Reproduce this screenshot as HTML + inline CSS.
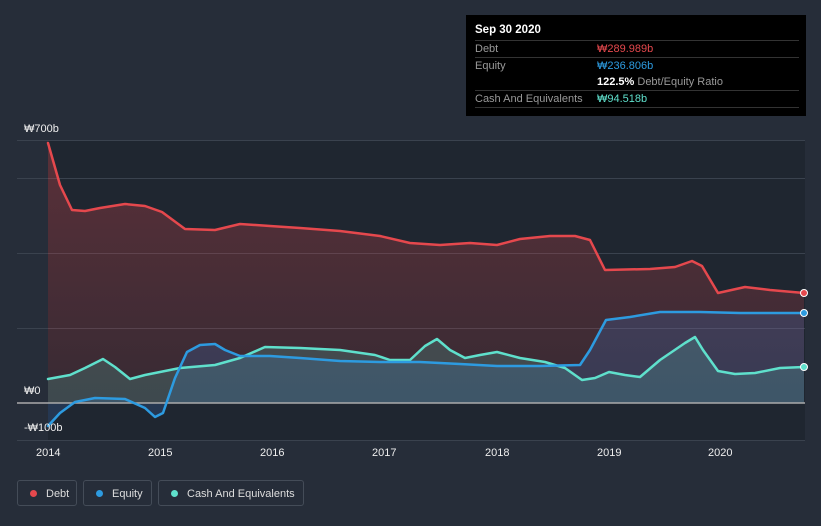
<!DOCTYPE html>
<html><head><meta charset="utf-8"><style>
body{margin:0;width:821px;height:526px;background:#262d39;font-family:"Liberation Sans","Noto Sans CJK KR",sans-serif;overflow:hidden;position:relative}
.tip{position:absolute;left:466px;top:15px;width:340px;height:101px;background:#000;color:#fff;font-size:11px}
.tip .h{position:absolute;left:9px;top:9px;font-weight:bold;font-size:11.5px}
.row{position:absolute;left:9px;width:324px;border-top:1px solid #333;height:17px;line-height:17px}
.row span{position:absolute;left:122px}
.lbl{color:#999}
.leg{position:absolute;top:480px;height:26px;border:1px solid #444c58;border-radius:3px;color:#ddd;font-size:11px;line-height:26px;box-sizing:border-box;padding-left:28px}
.leg i{position:absolute;left:12px;top:9px;width:7px;height:7px;border-radius:50%}
.ax{position:absolute;color:#eee;font-size:11px}
</style></head><body>
<svg width="821" height="526" style="position:absolute;left:0;top:0">
<defs>
<linearGradient id="gd" x1="0" y1="0" x2="0" y2="1"><stop offset="0" stop-color="#e5484d" stop-opacity=".3"/><stop offset="1" stop-color="#e5484d" stop-opacity=".12"/></linearGradient>
</defs>
<rect x="48" y="140" width="757" height="300" fill="#1f2630"/>
<g stroke="#3a424e" stroke-width="1"><line x1="17" y1="140.5" x2="805" y2="140.5"/><line x1="17" y1="178.5" x2="805" y2="178.5"/><line x1="17" y1="253.5" x2="805" y2="253.5"/><line x1="17" y1="328.5" x2="805" y2="328.5"/><line x1="17" y1="440.5" x2="805" y2="440.5"/></g>
<path fill="url(#gd)" d="M48,403 L48,143 L60,185 L72,210 L85,211 L100,208 L125,204 L145,206 L162,212 L185,229 L215,230 L240,224 L270,226 L300,228 L340,231 L380,236 L410,243 L440,245 L470,243 L497,245 L520,239 L550,236 L575,236 L590,240 L605,270 L650,269 L675,267 L692,261 L702,266 L718,293 L745,287 L770,290 L804,293 L804,403 Z"/>
<path fill="#3a78c8" fill-opacity=".22" d="M48,403 L48,426 L60,413 L75,402 L95,398 L125,399 L145,408 L155,417 L163,413 L175,378 L187,352 L200,345 L215,344 L225,350 L240,356 L270,356 L300,358 L340,361 L380,362 L420,362 L460,364 L497,366 L540,366 L580,365 L590,350 L606,320 L630,317 L660,312 L700,312 L740,313 L804,313 L804,403 Z"/>
<path fill="#5fd6c6" fill-opacity=".18" d="M48,403 L48,379 L70,375 L85,368 L103,359 L115,367 L130,379 L145,375 L160,372 L180,368 L215,365 L240,358 L265,347 L300,348 L340,350 L375,355 L390,360 L410,360 L425,346 L437,339 L450,350 L465,358 L480,355 L497,352 L520,358 L545,362 L565,368 L582,380 L595,378 L609,372 L625,375 L640,377 L660,360 L685,343 L695,337 L703,350 L718,371 L735,374 L755,373 L780,368 L804,367 L804,403 Z"/>
<line x1="17" y1="403" x2="805" y2="403" stroke="#aaa" stroke-width="1.5"/>
<g fill="none" stroke-width="2.5" stroke-linejoin="round" stroke-linecap="round">
<path stroke="#e5484d" d="M48,143 L60,185 L72,210 L85,211 L100,208 L125,204 L145,206 L162,212 L185,229 L215,230 L240,224 L270,226 L300,228 L340,231 L380,236 L410,243 L440,245 L470,243 L497,245 L520,239 L550,236 L575,236 L590,240 L605,270 L650,269 L675,267 L692,261 L702,266 L718,293 L745,287 L770,290 L804,293"/>
<path stroke="#5fe0cc" d="M48,379 L70,375 L85,368 L103,359 L115,367 L130,379 L145,375 L160,372 L180,368 L215,365 L240,358 L265,347 L300,348 L340,350 L375,355 L390,360 L410,360 L425,346 L437,339 L450,350 L465,358 L480,355 L497,352 L520,358 L545,362 L565,368 L582,380 L595,378 L609,372 L625,375 L640,377 L660,360 L685,343 L695,337 L703,350 L718,371 L735,374 L755,373 L780,368 L804,367"/>
<path stroke="#2d9be0" d="M48,426 L60,413 L75,402 L95,398 L125,399 L145,408 L155,417 L163,413 L175,378 L187,352 L200,345 L215,344 L225,350 L240,356 L270,356 L300,358 L340,361 L380,362 L420,362 L460,364 L497,366 L540,366 L580,365 L590,350 L606,320 L630,317 L660,312 L700,312 L740,313 L804,313"/>
</g>
<circle cx="804" cy="293" r="3.5" fill="#e5484d" stroke="#fff" stroke-width="1"/>
<circle cx="804" cy="313" r="3.5" fill="#2d9be0" stroke="#fff" stroke-width="1"/>
<circle cx="804" cy="367" r="3.5" fill="#5fe0cc" stroke="#fff" stroke-width="1"/>
</svg>
<div class="ax" style="left:24px;top:123px">₩700b</div>
<div class="ax" style="left:24px;top:385px">₩0</div>
<div class="ax" style="left:24px;top:422px">-₩100b</div>
<div class="ax" style="left:36px;top:447px">2014</div>
<div class="ax" style="left:148px;top:447px">2015</div>
<div class="ax" style="left:260px;top:447px">2016</div>
<div class="ax" style="left:372px;top:447px">2017</div>
<div class="ax" style="left:485px;top:447px">2018</div>
<div class="ax" style="left:597px;top:447px">2019</div>
<div class="ax" style="left:708px;top:447px">2020</div>
<div class="tip">
<div class="h">Sep 30 2020</div>
<div class="row" style="top:25px"><b class="lbl" style="font-weight:normal">Debt</b><span style="color:#e5484d">₩289.989b</span></div>
<div class="row" style="top:42px"><b class="lbl" style="font-weight:normal">Equity</b><span style="color:#2d9be0">₩236.806b</span></div>
<div class="row" style="top:59px;border-top:none"><span><b>122.5%</b> <span style="position:static;color:#999">Debt/Equity Ratio</span></span></div>
<div class="row" style="top:75px"><b class="lbl" style="font-weight:normal">Cash And Equivalents</b><span style="color:#5fe0cc">₩94.518b</span></div>
<div class="row" style="top:92px;height:0"></div>
</div>
<div class="leg" style="left:17px;width:60px"><i style="background:#e5484d"></i>Debt</div>
<div class="leg" style="left:83px;width:69px"><i style="background:#2d9be0"></i>Equity</div>
<div class="leg" style="left:158px;width:146px"><i style="background:#5fe0cc"></i>Cash And Equivalents</div>
</body></html>
